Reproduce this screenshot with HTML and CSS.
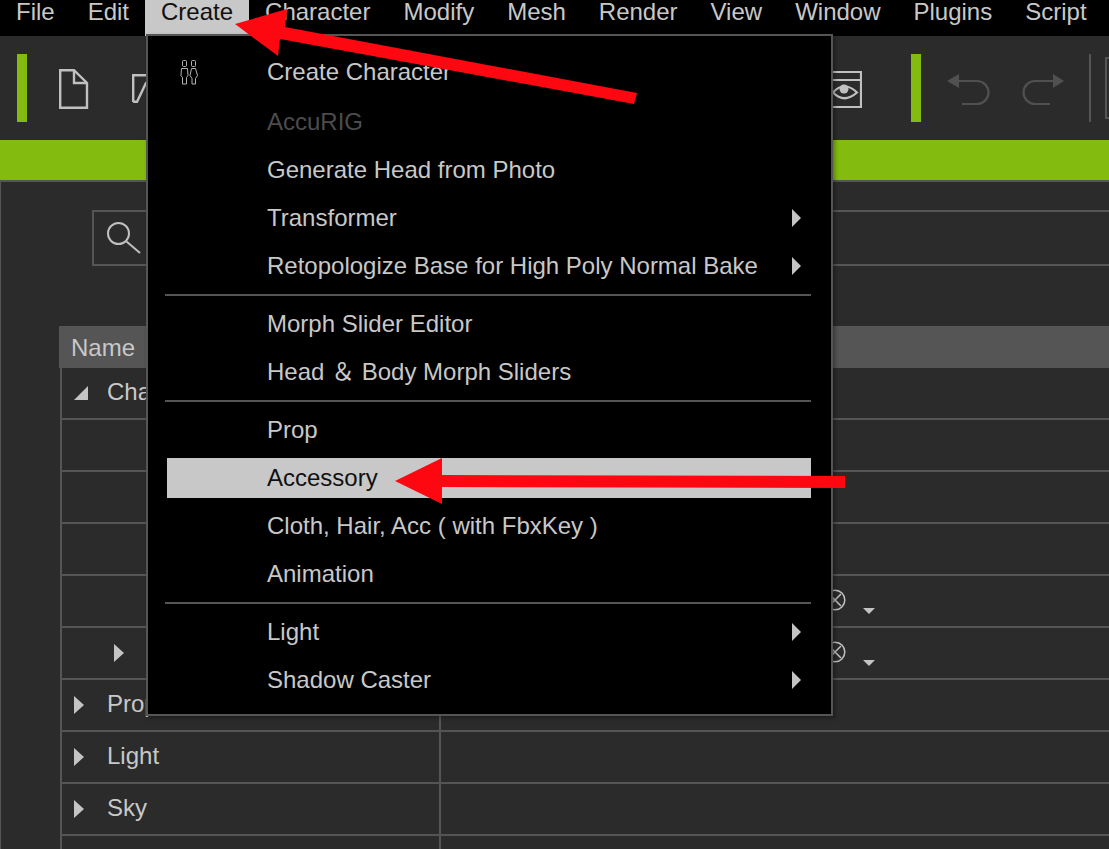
FILE: index.html
```html
<!DOCTYPE html>
<html lang="en">
<head>
<meta charset="utf-8">
<title>Create menu</title>
<link rel="stylesheet" href="styles.css">
</head>
<body>
<div class="app">
  <nav class="menubar">
    <span class="mi">File</span><span class="mi">Edit</span><span class="mi active">Create</span><span class="mi">Character</span><span class="mi">Modify</span><span class="mi">Mesh</span><span class="mi">Render</span><span class="mi">View</span><span class="mi">Window</span><span class="mi">Plugins</span><span class="mi">Script</span>
  </nav>
  <div class="toolbar">
    <i class="grip"></i>
    <svg class="tb-new" width="30" height="40" viewBox="0 0 30 40" fill="none" stroke="#c0c0c0" stroke-width="2.4"><path d="M1.200 1.200H15L28 14V38.800H1.200Z"/><path d="M15 1.200V14H28"/></svg>
    <svg class="tb-open" width="30" height="30" viewBox="0 0 30 30" fill="none" stroke="#c0c0c0" stroke-width="2.4"><path d="M1.200 28V1.200H30M1.200 27.800H5L14 9H30"/></svg>
    <div class="tb-spacer"></div>
    <svg class="tb-eye" width="32" height="37" viewBox="0 0 32 37" fill="none" stroke="#c0c0c0" stroke-width="2.200"><path d="M0 1H31V36H0M0 9H31"/><path d="M3 21.500Q14 9 27 21.500Q14 33 3 21.500Z"/><circle cx="14" cy="18" r="4.500" fill="#c0c0c0" stroke="none"/></svg>
    <i class="grip grip-2"></i>
    <svg class="tb-undo" width="44" height="32" viewBox="0 0 44 32" fill="none" stroke="#505050" stroke-width="2.200"><path d="M10 7H30A11.500 11.500 0 0 1 30 30H15"/><path d="M0 7L12 0V14Z" fill="#505050" stroke="none"/></svg>
    <svg class="tb-redo" width="44" height="32" viewBox="0 0 44 32" fill="none" stroke="#505050" stroke-width="2.200"><path d="M32 7H13A11.500 11.500 0 0 0 13 30H28"/><path d="M42 7L31 0V14Z" fill="#505050" stroke="none"/></svg>
    <i class="vsep"></i>
    <i class="clipped"></i>
  </div>
  <div class="greenbar"></div>
  <main class="panel">
    <div class="search">
      <svg width="36" height="36" viewBox="0 0 36 36" fill="none" stroke="#c0c0c0" stroke-width="2"><circle cx="11.500" cy="11.500" r="10.500"/><path d="M19.500 19.500L33 31"/></svg>
    </div>
    <div class="table">
      <div class="thead"><span>Name</span></div>
      <div class="row"><div class="cell-a"><b class="tri open"></b><span class="lbl">Character</span></div><div class="cell-b"></div></div>
      <div class="row"><div class="cell-a"></div><div class="cell-b"></div></div>
      <div class="row"><div class="cell-a"></div><div class="cell-b"></div></div>
      <div class="row"><div class="cell-a"></div><div class="cell-b"></div></div>
      <div class="row"><div class="cell-a"></div><div class="cell-b ctrl"><svg class="cx" width="22" height="22" viewBox="0 0 22 22" fill="none" stroke="#c0c0c0" stroke-width="1.500"><circle cx="11" cy="11" r="9.800"/><path d="M5 5L17 17M17 5L5 17"/></svg><b class="caret"></b></div></div>
      <div class="row"><div class="cell-a indent"><b class="tri"></b></div><div class="cell-b ctrl"><svg class="cx" width="22" height="22" viewBox="0 0 22 22" fill="none" stroke="#c0c0c0" stroke-width="1.500"><circle cx="11" cy="11" r="9.800"/><path d="M5 5L17 17M17 5L5 17"/></svg><b class="caret"></b></div></div>
      <div class="row"><div class="cell-a"><b class="tri"></b><span class="lbl">Prop</span></div><div class="cell-b"></div></div>
      <div class="row"><div class="cell-a"><b class="tri"></b><span class="lbl">Light</span></div><div class="cell-b"></div></div>
      <div class="row"><div class="cell-a"><b class="tri"></b><span class="lbl">Sky</span></div><div class="cell-b"></div></div>
      <div class="row"><div class="cell-a"></div><div class="cell-b"></div></div>
    </div>
  </main>
</div>

<div class="menu">
  <div class="item first">
    <svg class="item-icon" width="18" height="25" viewBox="0 0 18 25" fill="none" stroke="#b4b4b4" stroke-width="1"><rect x="2.500" y="0.500" width="4" height="6" rx="1"/><rect x="11.500" y="0.500" width="4" height="6" rx="1"/><path d="M1.500 8.500H7.500L8 15.500L6.500 17.500V24H2.500V17.500L1 15.500Z"/><path d="M11.500 8.500H15.500L17.500 15.500L15.500 18.500V24H12V18.500L10 15.500Z"/></svg>
    Create Character
  </div>
  <div class="item disabled">AccuRIG</div>
  <div class="item">Generate Head from Photo</div>
  <div class="item sub">Transformer</div>
  <div class="item sub">Retopologize Base for High Poly Normal Bake</div>
  <hr class="sep">
  <div class="item">Morph Slider Editor</div>
  <div class="item">Head ＆ Body Morph Sliders</div>
  <hr class="sep">
  <div class="item">Prop</div>
  <div class="item hot">Accessory</div>
  <div class="item">Cloth, Hair, Acc ( with FbxKey )</div>
  <div class="item">Animation</div>
  <hr class="sep">
  <div class="item sub">Light</div>
  <div class="item sub">Shadow Caster</div>
</div>

<svg class="arrows" width="1109" height="849" viewBox="0 0 1109 849">
  <polygon fill="#fd0711" points="235,24 287,9 285,27 637,93 634,104 280,39 278,56"/>
  <polygon fill="#fd0711" points="395,481 442,458 442,475 845,476 845,488 442,487 442,504"/>
</svg>
</body>
</html>
```
FILE: styles.css
```css
* { box-sizing: border-box; }
html, body { margin: 0; height: 100%; overflow: hidden; background: #2b2b2b; }
body { font-family: "Liberation Sans", Arial, "Noto Sans CJK SC", sans-serif; font-size: 24px; color: #c8c8c8; position: relative; }
i, b { display: block; font-style: normal; }

.app { display: flex; flex-direction: column; height: 849px; }

.menubar { height: 36px; background: #000; display: flex; flex: none; }
.mi { padding: 0 17px 0 16px; line-height: 24px; height: 36px; color: #c8c8c8; white-space: nowrap; }
.mi.active { background: #c8c8c8; color: #111; padding: 0 16px; margin-left: -1px; }

.toolbar { height: 104px; flex: none; background: #2b2b2b; display: flex; align-items: flex-start; padding: 18px 0 0 17px; }
.grip { width: 10px; height: 68px; background: #83bc0e; flex: none; }
.tb-new { margin: 15px 0 0 32px; flex: none; }
.tb-open { margin: 20px 0 0 43px; flex: none; }
.tb-spacer { flex: none; width: 668px; }
.tb-eye { margin: 17px 0 0 0; flex: none; }
.grip-2 { margin-left: 49px; }
.tb-undo { margin: 20px 0 0 26px; flex: none; }
.tb-redo { margin: 20px 0 0 31px; flex: none; }
.vsep { width: 2px; height: 68px; background: #555; margin-left: 23px; flex: none; }
.clipped { width: 20px; height: 62px; border: 2px solid #555; border-right: 0; margin: 3px 0 0 14px; flex: none; }

.greenbar { height: 40px; flex: none; background: #83bc0e; }

.panel { flex: 1; min-height: 0; border-top: 2px solid #555; border-left: 1px solid #555; padding: 28px 0 0 59px; display: flex; flex-direction: column; overflow: hidden; }
.search { width: 1049px; margin-left: 32px; height: 56px; border: 2px solid #555; border-right: 0; flex: none; padding: 10px 0 0 13px; }
.search svg { display: block; }

.table { margin-top: 60px; border-left: 2px solid #555; flex: none; }
.thead { height: 42px; background: #555; color: #c8c8c8; margin-left: -3px; padding: 5px 0 0 12px; line-height: 34px; }
.row { height: 52px; display: flex; border-bottom: 2px solid #555; }
.cell-a { width: 379px; flex: none; border-right: 2px solid #555; display: flex; align-items: center; padding-left: 12px; }
.cell-a.indent { padding-left: 52px; }
.cell-b { flex: 1; }
.lbl { margin: 0 0 2px 23px; }
.tri { width: 0; height: 0; border-style: solid; border-width: 9.5px 0 9.5px 10px; border-color: transparent transparent transparent #c4c4c4; flex: none; }
.tri.open { border-width: 0 0 14px 14px; border-color: transparent transparent #c4c4c4 transparent; }
.tri.open + .lbl { margin-left: 19px; }
.ctrl { display: flex; padding-left: 383px; }
.cx { margin-top: 13px; flex: none; }
.caret { width: 0; height: 0; border-style: solid; border-width: 6px 6px 0 6px; border-color: #c4c4c4 transparent transparent transparent; margin: 32px 0 0 17px; flex: none; }

.menu { position: absolute; left: 146px; top: 34px; width: 687px; height: 682px; background: #000; border: 2px solid #555; padding: 12px 20px 0 19px; box-shadow: 2px 2px 4px rgba(0,0,0,.35); }
.item { position: relative; height: 48px; line-height: 48px; padding-left: 100px; white-space: nowrap; color: #c8c8c8; }
.item.first { height: 50px; }
.item.disabled { color: #4c4c4c; }
.item.hot { background: #c8c8c8; color: #111; height: 40px; margin: 4px 0; line-height: 40px; }
.item-icon { position: absolute; left: 13px; top: 12px; }
.item.sub::after { content: ""; position: absolute; right: 10px; top: 15px; border-style: solid; border-width: 9px 0 9px 9px; border-color: transparent transparent transparent #c4c4c4; }
.sep { height: 2px; margin: 4px 0 4px -2px; border: 0; background: #555; }

.arrows { position: absolute; left: 0; top: 0; pointer-events: none; }
```
